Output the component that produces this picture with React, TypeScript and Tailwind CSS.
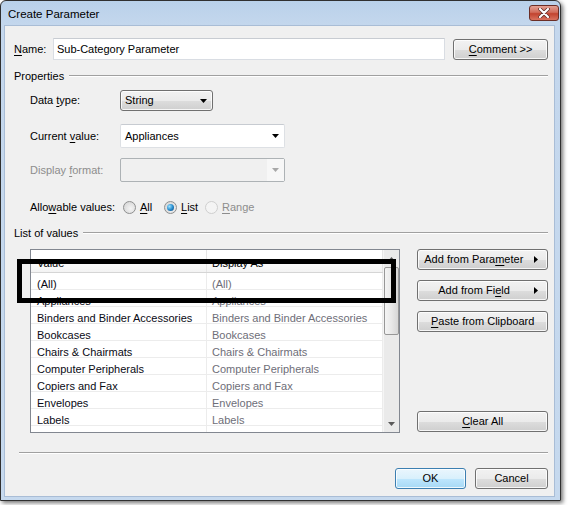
import type { ReactNode } from "react";

const rows = [
  "(All)",
  "Appliances",
  "Binders and Binder Accessories",
  "Bookcases",
  "Chairs & Chairmats",
  "Computer Peripherals",
  "Copiers and Fax",
  "Envelopes",
  "Labels",
  "",
];

function U({ children }: { children: ReactNode }) {
  return <span className="underline decoration-1 underline-offset-[2px]">{children}</span>;
}

function Btn({
  children,
  className = "",
  primary = false,
}: {
  children: ReactNode;
  className?: string;
  primary?: boolean;
}) {
  return (
    <div
      className={`flex items-center h-[21px] rounded-[3px] border text-[11px] text-black whitespace-nowrap shadow-[inset_0_0_0_1px_rgba(255,255,255,0.8)] ${
        primary
          ? "border-[#3c7fb1] bg-[linear-gradient(#eaf6fd_0%,#d9f0fc_50%,#bee6fd_51%,#a7d9f5_100%)]"
          : "border-[#707070] bg-[linear-gradient(#f2f2f2_0%,#ebebeb_50%,#dddddd_51%,#cfcfcf_100%)]"
      } ${className}`}
    >
      {children}
    </div>
  );
}

function Arrow({ color = "#000" }: { color?: string }) {
  return (
    <svg width="7" height="4" viewBox="0 0 7 4">
      <path d="M0 0H7L3.5 4Z" fill={color} />
    </svg>
  );
}

function RightArrow() {
  return (
    <svg width="4" height="7" viewBox="0 0 4 7">
      <path d="M0 0V7L4 3.5Z" fill="#000" />
    </svg>
  );
}

function Radio({ checked = false, disabled = false }: { checked?: boolean; disabled?: boolean }) {
  return (
    <div
      className={`flex items-center justify-center w-[13px] h-[13px] rounded-full border ${
        disabled
          ? "border-[#cfcfcf] bg-[#f4f4f4]"
          : "border-[#8e8f8f] bg-[radial-gradient(circle_at_60%_60%,#f4f4f4_0%,#d0d0d0_100%)]"
      }`}
    >
      {checked && (
        <div className="w-[7px] h-[7px] rounded-full bg-[radial-gradient(circle_at_35%_35%,#9fe3ff_0%,#2a8fd0_50%,#0b3d72_100%)]" />
      )}
    </div>
  );
}

export default function App() {
  return (
    <div className="relative w-[568px] h-[505px] bg-white font-['Liberation_Sans',Arial,sans-serif] text-[11px] text-black whitespace-nowrap">
      {/* window */}
      <div className="flex flex-col w-[561px] h-[501px] border border-[#303030] rounded-t-[6px] bg-[linear-gradient(#b9d1ea_0px,#c4d7ed_24px,#c6d9ee_100%)] shadow-[2px_2px_4px_rgba(0,0,0,0.55)]">
        {/* title bar */}
        <div className="flex items-start justify-between h-[24px] pl-[7px] pr-[1px]">
          <span className="mt-[5px] text-[11.5px] text-black">Create Parameter</span>
          <div className="flex items-center justify-center mt-[4px] w-[30px] h-[16px] rounded-[3px] border border-[#6b2e26] bg-[linear-gradient(#e3a193_0%,#d26c5b_45%,#c2432f_55%,#d9735f_100%)]">
            <svg width="12" height="10" viewBox="0 0 12 10">
              <path d="M2 1L10 9M10 1L2 9" stroke="#5a2a24" strokeWidth="3.6" strokeLinecap="round" />
              <path d="M2 1L10 9M10 1L2 9" stroke="#ffffff" strokeWidth="2.2" strokeLinecap="round" />
            </svg>
          </div>
        </div>

        {/* client */}
        <div className="flex flex-col flex-1 ml-[3px] mr-[5px] mb-[3px] bg-[#f0f0f0] border border-[#a9bdd6] pl-[9px] pr-[6px] pt-[12px]">
          {/* Name */}
          <div className="flex items-center h-[22px]">
            <span className="w-[39px]">
              <U>N</U>ame:
            </span>
            <div className="flex items-center w-[393px] h-[22px] border border-[#d9dde3] border-t-[#c8ccd2] bg-white pl-[3px]">
              Sub-Category Parameter
            </div>
            <Btn className="ml-[8px] w-[95px] justify-center">
              <span>
                <U>C</U>omment &gt;&gt;
              </span>
            </Btn>
          </div>

          {/* Properties */}
          <div className="flex items-center h-[14px] mt-[9px]">
            <span>Properties</span>
            <div className="flex-1 ml-[5px] h-[2px] border-t border-[#a0a0a0] border-b-white border-b" />
          </div>

          <div className="flex flex-col pl-[16px]">
            <div className="flex items-center mt-[7px]">
              <span className="w-[90px]">
                Data <U>t</U>ype:
              </span>
              <Btn className="w-[93px] h-[21px] justify-between pl-[4px] pr-[5px]">
                <span>String</span>
                <Arrow />
              </Btn>
            </div>

            <div className="flex items-center mt-[13px]">
              <span className="w-[90px]">
                Current <U>v</U>alue:
              </span>
              <div className="flex items-center justify-between w-[165px] h-[24px] rounded-[2px] border border-[#dde0e4] border-t-[#c7cbd1] bg-white pl-[4px] pr-[5px]">
                <span>Appliances</span>
                <Arrow />
              </div>
            </div>

            <div className="flex items-center mt-[10px]">
              <span className="w-[90px] text-[#8d8d8d]">
                Display <U>f</U>ormat:
              </span>
              <div className="flex items-stretch w-[165px] h-[24px] rounded-[2px] border border-[#adb2b5] bg-[#f0f0f0]">
                <div className="flex-1" />
                <div className="flex items-center justify-center w-[17px] bg-[#f7f7f7]">
                  <Arrow color="#a8a8a8" />
                </div>
              </div>
            </div>

            <div className="flex items-center h-[16px] mt-[17px]">
              <span className="w-[93px]">
                Allo<U>w</U>able values:
              </span>
              <Radio />
              <span className="ml-[4px] w-[24px]">
                <U>A</U>ll
              </span>
              <Radio checked />
              <span className="ml-[4px] w-[24px]">
                <U>L</U>ist
              </span>
              <Radio disabled />
              <span className="ml-[4px] text-[#8d8d8d]">
                <U>R</U>ange
              </span>
            </div>
          </div>

          {/* List of values */}
          <div className="flex items-center h-[14px] mt-[11px]">
            <span>List of values</span>
            <div className="flex-1 ml-[5px] h-[2px] border-t border-[#a0a0a0] border-b-white border-b" />
          </div>

          <div className="flex mt-[9px] pl-[16px]">
            {/* table */}
            <div className="flex w-[371px] h-[184px] border border-[#828790] bg-white overflow-hidden">
              <div className="flex flex-col w-[352px]">
                <div className="flex h-[23px] shrink-0 border-b border-[#d5d5d5] bg-[linear-gradient(#ffffff_0%,#ffffff_40%,#f3f3f3_100%)]">
                  <div className="flex items-center w-[176px] pl-[6px] pt-[4px] border-r border-[#e5e5e5]">Value</div>
                  <div className="flex items-center w-[176px] pl-[5px] pt-[4px] border-r border-[#e5e5e5]">Display As</div>
                </div>
                {rows.map((r, i) => (
                  <div key={i} className="flex h-[17px] shrink-0 border-b border-[#ececec]">
                    <div className="flex items-center w-[176px] pl-[6px] pt-[6px] border-r border-[#ececec] text-[#0a0a14]">{r}</div>
                    <div className="flex items-center w-[176px] pl-[5px] pt-[6px] border-r border-[#ececec] text-[#6e6e78]">{r}</div>
                  </div>
                ))}
              </div>
              {/* scrollbar */}
              <div className="flex flex-col items-center w-[17px] bg-[#eaeaea] border-l border-[#f5f5f5]">
                <div className="flex items-center justify-center h-[17px] w-full">
                  <svg width="7" height="4" viewBox="0 0 7 4">
                    <path d="M0 4H7L3.5 0Z" fill="#5a5a5a" />
                  </svg>
                </div>
                <div className="w-[15px] h-[68px] rounded-[2px] border border-[#979797] bg-[linear-gradient(90deg,#f4f4f4_0%,#e8e8e8_50%,#d6d6d6_100%)]" />
                <div className="flex-1" />
                <div className="flex items-center justify-center h-[17px] w-full">
                  <Arrow color="#5a5a5a" />
                </div>
              </div>
            </div>

            {/* right buttons */}
            <div className="flex flex-col ml-[17px] w-[131px]">
              <Btn className="justify-between pl-[6px] pr-[9px]">
                <span>
                  Add from Para<U>m</U>eter
                </span>
                <RightArrow />
              </Btn>
              <Btn className="mt-[10px] justify-between pl-[20px] pr-[9px]">
                <span>
                  Add from Fi<U>e</U>ld
                </span>
                <RightArrow />
              </Btn>
              <Btn className="mt-[10px] justify-center">
                <span>
                  <U>P</U>aste from Clipboard
                </span>
              </Btn>
              <Btn className="mt-[79px] justify-center">
                <span>
                  <U>C</U>lear All
                </span>
              </Btn>
            </div>
          </div>

          {/* separator */}
          <div className="ml-[5px] mt-[19px] h-[2px] border-t border-[#a0a0a0] border-b border-b-white" />

          {/* footer */}
          <div className="flex justify-end mt-[14px]">
            <Btn primary className="w-[71px] justify-center">
              OK
            </Btn>
            <Btn className="ml-[9px] w-[73px] justify-center">Cancel</Btn>
          </div>
        </div>
      </div>

      {/* annotation rectangle */}
      <div className="absolute left-[17px] top-[259px] w-[379px] h-[44px] border-[5px] border-black" />
    </div>
  );
}
